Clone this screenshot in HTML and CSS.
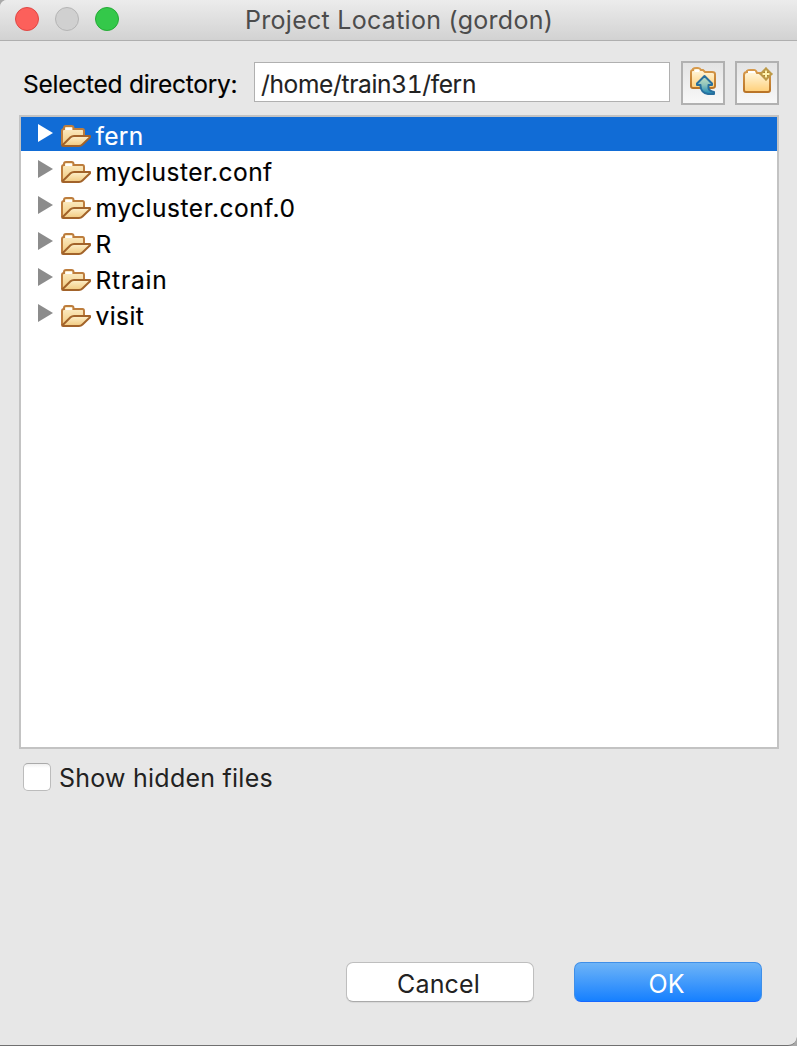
FILE: index.html
```html
<!DOCTYPE html>
<html lang="en">
<head>
<meta charset="utf-8">
<title>Project Location (gordon)</title>
<link rel="stylesheet" href="styles.css">
</head>
<body>
<svg class="defs" width="0" height="0" aria-hidden="true">
  <defs>
    <linearGradient id="paper" x1="0" y1="0" x2="0" y2="1"><stop offset="0" stop-color="#fdf0cc"/><stop offset="1" stop-color="#f1c97e"/></linearGradient>
    <linearGradient id="gold" x1="0" y1="0" x2="0" y2="1"><stop offset="0" stop-color="#fffbe9"/><stop offset="1" stop-color="#ffcf78"/></linearGradient>
    <linearGradient id="edge" x1="0" y1="0" x2="0" y2="1"><stop offset="0" stop-color="#d79a4c"/><stop offset="1" stop-color="#b97427"/></linearGradient>
    <linearGradient id="arrow" x1="0" y1="0" x2="0" y2="1"><stop offset="0" stop-color="#c5e2c3"/><stop offset=".5" stop-color="#8fc3bb"/><stop offset="1" stop-color="#1685b5"/></linearGradient>
    <symbol id="folder" viewBox="0 0 30 22">
      <path d="M1 20V6Q1 4 3 4V3Q3 1 5 1H10.500Q12.500 1 12.500 3V4H21.500Q23 4 23 6V12" fill="url(#paper)" stroke="#bd7d3d" stroke-width="2"/>
      <path d="M4.500 4H11" stroke="#fff" stroke-width="2"/>
      <path d="M1.200 20.500L9.500 12.300Q11 11 13 11H29V12.200L21.500 19.500Q20 21 18 21H2Q1 21 1 19.500" fill="url(#paper)" stroke="#a2632a" stroke-width="2" stroke-linejoin="round"/>
    </symbol>
  </defs>
</svg>
<main class="window">
  <header class="titlebar">
    <div class="lights"><i class="light close"></i><i class="light minimize"></i><i class="light zoom"></i></div>
    <h1 class="title">Project Location (gordon)</h1>
  </header>
  <section class="pathbar">
    <label class="path-label" for="dir">Selected directory:</label>
    <div class="path-field" id="dir">/home/train31/fern</div>
    <button class="tool" aria-label="Parent folder">
      <svg width="28" height="30" viewBox="0 0 28 30">
        <path d="M3 5Q3 3 5 3V2Q6 1 8 1H10Q12 1 13 3H15L17 5H24Q27 5 27 7V19Q27 21 24 21H5Q3 21 3 19Z" transform="translate(-1 0)" fill="url(#gold)" stroke="url(#edge)" stroke-width="2"/>
        <path d="M6 4H10" stroke="#fff" stroke-width="2"/>
        <path d="M15.500 9L23 16.500V18H19.500V21Q20 24 25 25V27H19Q12 26 11.500 19V18H8V16.500Z" fill="url(#arrow)" stroke="#286f9e" stroke-width="2" stroke-linejoin="round"/>
      </svg>
    </button>
    <button class="tool" aria-label="New folder">
      <svg width="30" height="30" viewBox="0 0 30 30">
        <path d="M2 8Q2 5 5 5V4Q6 3 8 3H12Q14 3 15 6H24Q28 6 28 9V23Q28 25 26 25H4Q2 25 2 23Z" fill="url(#gold)" stroke="url(#edge)" stroke-width="2"/>
        <path d="M6 5H13" stroke="#fff" stroke-width="2"/>
        <path d="M24 0L26 5L31 7L26 9L24 14L22 9L17 7L22 5Z" fill="#a8822b"/>
        <path d="M24 1.500L29.500 7L24 12.500L18.500 7Z" fill="none" stroke="#bd9a48" stroke-width="2"/>
        <path d="M24 3.500V10.500M20.500 7H27.500" stroke="#fff3b0" stroke-width="2"/>
      </svg>
    </button>
  </section>
  <ul class="tree">
    <li class="row selected"><i class="arrow"></i><svg class="folder"><use href="#folder"/></svg><span class="name n1">fern</span></li>
    <li class="row"><i class="arrow"></i><svg class="folder"><use href="#folder"/></svg><span class="name n2">mycluster.conf</span></li>
    <li class="row"><i class="arrow"></i><svg class="folder"><use href="#folder"/></svg><span class="name n3">mycluster.conf.0</span></li>
    <li class="row"><i class="arrow"></i><svg class="folder"><use href="#folder"/></svg><span class="name n4">R</span></li>
    <li class="row"><i class="arrow"></i><svg class="folder"><use href="#folder"/></svg><span class="name n5">Rtrain</span></li>
    <li class="row"><i class="arrow"></i><svg class="folder"><use href="#folder"/></svg><span class="name n6">visit</span></li>
  </ul>
  <div class="option"><i class="checkbox"></i><span class="option-label">Show hidden files</span></div>
  <footer class="actions">
    <button class="btn cancel">Cancel</button>
    <button class="btn ok">OK</button>
  </footer>
</main>
</body>
</html>
```
FILE: styles.css
```css
* { box-sizing: border-box; }
body { margin: 0; background: #a9a9a9; font-family: Inter, "Liberation Sans", sans-serif; font-size: 25px; line-height: 30px; color: #000; }
button { font: inherit; padding: 0; margin: 0; }
.defs { display: block; }
.window { width: 797px; height: 1046px; display: flex; flex-direction: column; background: #e7e7e7; border-bottom: 1px solid #707070; border-radius: 7px 0 9px 0; overflow: hidden; }
.titlebar { height: 41px; flex: none; display: grid; grid-template-columns: 245px 1fr; background: linear-gradient(#ececec, #d2d2d2); border-bottom: 1px solid #afafaf; }
.lights { display: flex; gap: 16px; padding: 7px 0 0 15px; }
.light { width: 24px; height: 24px; border-radius: 50%; border: 1px solid; }
.close { background: #fc605b; border-color: #df4744; }
.minimize { background: #d0d0d0; border-color: #b4b4b4; }
.zoom { background: #34c84a; border-color: #24aa35; }
.title { margin: 5px 0 0; font-size: 25px; font-weight: 400; color: #4c4c4c; white-space: nowrap; letter-spacing: .28px; }
.pathbar { flex: none; height: 74px; padding: 20px 18px 0 23px; display: flex; align-items: flex-start; }
.path-label { width: 231px; padding-top: 8px; font-size: 24.500px; white-space: nowrap; letter-spacing: -.25px; -webkit-text-stroke: .15px currentColor; }
.path-field { width: 416px; height: 40px; margin: 1px 11px 0 0; padding: 7px 6px 0; font-size: 24.500px; line-height: 28px; background: #fff; border: 1px solid #b0b0b0; color: #222; white-space: nowrap; font-variant-numeric: tabular-nums; letter-spacing: -.35px; -webkit-text-stroke: .1px currentColor; }
.tool { width: 44px; height: 44px; margin-right: 10px; border: 2px solid #b1b1b1; background: linear-gradient(#e4e4e4, #f8f8f8); display: flex; justify-content: center; padding-top: 4px; align-items: flex-start; }
.tool svg { overflow: visible; }
.tool:last-child { margin-right: 0; }
.tree { list-style: none; flex: none; width: 760px; height: 634px; margin: 0 0 0 19px; padding: 0; border: 2px solid #c3c3c3; background: #fff; }
.row { height: 34px; margin-bottom: 2px; padding-left: 17px; display: flex; align-items: flex-start; white-space: nowrap; }
.arrow { width: 15px; height: 18px; margin-top: 7px; background: #8c8c8c; clip-path: polygon(0 0, 100% 50%, 0 100%); }
.folder { width: 30px; height: 22px; margin: 8px 4.500px 0 8px; flex: none; }
.name { padding-top: 4px; font-size: 24.500px; letter-spacing: .45px; -webkit-text-stroke: .15px currentColor; }
.n1 { letter-spacing: .3px; }
.n3 { letter-spacing: .55px; }
.n5 { letter-spacing: .8px; }
.selected { background: #116cd6; color: #fff; }
.selected .arrow { background: #fff; }
.option { flex: none; display: flex; height: 46px; padding: 14px 0 0 23px; color: #222; }
.checkbox { width: 28px; height: 28px; border: 1px solid #bcbcbc; border-top-color: #aaa; border-radius: 5px; background: linear-gradient(#f0f0f0, #fff 4px); }
.option-label { margin-left: 8px; font-size: 25px; letter-spacing: .24px; white-space: nowrap; }
.actions { margin-top: auto; display: flex; justify-content: flex-end; gap: 40px; padding: 0 35px 43px 0; }
.btn { width: 188px; height: 40px; border-radius: 7px; line-height: 42px; font-size: 25px; }
.cancel { background: #fff; border: 1px solid #bebebe; border-bottom-color: #aaa; box-shadow: 0 1px 1px #0001; color: #222; padding-right: 3px; letter-spacing: .15px; }
.ok { background: linear-gradient(#6eb4f7, #1680ff); border: 1px solid #3f8fe8; border-bottom-color: #1767ff; color: #fff; padding-right: 3px; }
```
